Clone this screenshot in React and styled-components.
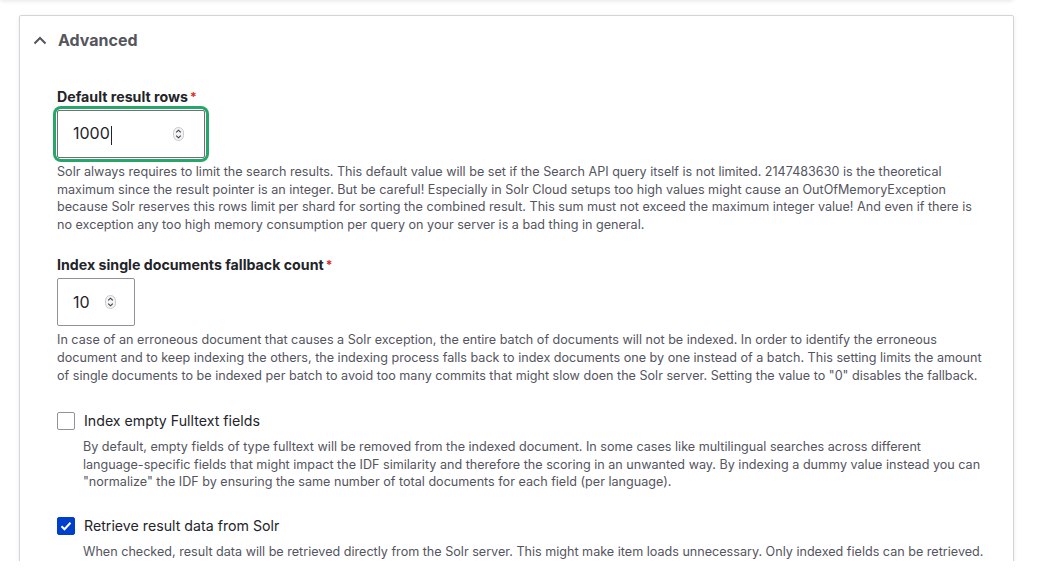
import React from 'react';
import styled, { createGlobalStyle } from 'styled-components';

const GlobalStyle = createGlobalStyle`
  html, body {
    margin: 0;
    padding: 0;
    background: #fff;
    overflow: hidden;
  }
  body {
    font-family: Inter, "Liberation Sans", Arial, sans-serif;
    color: #232429;
    -webkit-font-smoothing: antialiased;
  }
`;

const Page = styled.div`
  width: 1037px;
  height: 581px;
  padding-left: 19px;
  box-sizing: border-box;
`;

const PrevCard = styled.div`
  width: 1013px;
  height: 20px;
  margin: -20px 0 0 -19px;
  background: #fff;
  box-shadow: 0 1px 4px rgba(0, 0, 0, 0.1);
`;

const Details = styled.div`
  width: 995px;
  height: 600px;
  margin-top: 15px;
  box-sizing: border-box;
  border: 1px solid #d3d4d9;
  border-radius: 2px;
  box-shadow: 0 1px 4px rgba(0, 0, 0, 0.08);
`;

const Summary = styled.div`
  display: flex;
  align-items: center;
  gap: 11px;
  height: 48px;
  padding-left: 13px;
  font-size: 16px;
  font-weight: 700;
  color: #55565b;
`;

const Body = styled.div`
  padding: 24px 0 0 37px;
`;

const FormItem = styled.div`
  margin-bottom: ${({ $mb }) => $mb || 24}px;
`;

const Label = styled.div`
  font-size: 14.2px;
  font-weight: 700;
  line-height: 18px;
  margin-bottom: 4px;
  color: #232429;

  &::after {
    content: '*';
    color: #dc2323;
    margin-left: 2px;
    font-size: 12px;
    vertical-align: top;
  }
`;

const FocusRing = styled.div`
  display: inline-block;
  border-radius: 4px;
  box-shadow: ${({ $focus }) =>
    $focus ? '0 0 0 1px #fff, 0 0 0 4px #26a769' : 'none'};
`;

const NumberField = styled.div`
  display: flex;
  align-items: center;
  justify-content: space-between;
  width: ${({ $w }) => $w}px;
  height: 48px;
  box-sizing: border-box;
  padding: 0 ${({ $pr }) => $pr}px 0 15px;
  border: 1px solid ${({ $focus }) => ($focus ? '#6f7077' : '#919297')};
  border-radius: 2px;
  font-size: 16px;
  color: #232429;
  background: #fff;
`;

const Caret = styled.span`
  display: inline-block;
  width: 1px;
  height: 19px;
  margin-left: 1px;
  background: #232429;
  vertical-align: middle;
`;

const Description = styled.div`
  margin-top: ${({ $indent }) => ($indent ? 7 : 5)}px;
  font-size: 12.6px;
  line-height: 17.6px;
  color: #545560;
  padding-left: ${({ $indent }) => ($indent ? 26 : 0)}px;
  white-space: nowrap;
`;

const CheckRow = styled.div`
  display: flex;
  align-items: center;
  gap: 9px;
  font-size: 14.2px;
  line-height: 20px;
  color: #232429;
`;

const Box = styled.span`
  display: inline-flex;
  align-items: center;
  justify-content: center;
  width: 18px;
  height: 18px;
  box-sizing: border-box;
  border-radius: 2px;
  border: 1px solid ${({ $checked }) => ($checked ? '#003ecc' : '#919297')};
  background: ${({ $checked }) => ($checked ? '#003ecc' : '#fff')};
`;

const Chevron = () => (
  <svg width="14" height="9" viewBox="0 0 14 9" fill="none">
    <path d="M1.5 7.5L7 2l5.5 5.5" stroke="#55565b" strokeWidth="2" />
  </svg>
);

const Spinner = () => (
  <svg width="11" height="14" viewBox="0 0 11 14" fill="none">
    <rect x="0.5" y="0.5" width="10" height="13" rx="5" fill="#f3f3f5" stroke="#c9cacf" />
    <path d="M3.2 5.4L5.5 3.2l2.3 2.2" stroke="#3b3c42" strokeWidth="1.1" />
    <path d="M3.2 8.6L5.5 10.8l2.3-2.2" stroke="#3b3c42" strokeWidth="1.1" />
  </svg>
);

const Check = () => (
  <svg width="12" height="10" viewBox="0 0 12 10" fill="none">
    <path d="M1.5 5.2l3 3L10.5 1.8" stroke="#fff" strokeWidth="2" />
  </svg>
);

const NumberInput = ({ value, width, pr, focus }) => (
  <FocusRing $focus={focus}>
    <NumberField $w={width} $pr={pr} $focus={focus}>
      <span>
        {value}
        {focus && <Caret />}
      </span>
      <Spinner />
    </NumberField>
  </FocusRing>
);

export default function App() {
  return (
    <Page>
      <GlobalStyle />
      <PrevCard />
      <Details>
        <Summary>
          <Chevron />
          Advanced
        </Summary>
        <Body>
          <FormItem $mb={23}>
            <Label>Default result rows</Label>
            <NumberInput value="1000" width={148} pr={20} focus />
            <Description>
              Solr always requires to limit the search results. This default value will be set if the Search API query itself is not limited. 2147483630 is the theoretical
              <br />
              maximum since the result pointer is an integer. But be careful! Especially in Solr Cloud setups too high values might cause an OutOfMemoryException
              <br />
              because Solr reserves this rows limit per shard for sorting the combined result. This sum must not exceed the maximum integer value! And even if there is
              <br />
              no exception any too high memory consumption per query on your server is a bad thing in general.
            </Description>
          </FormItem>
          <FormItem $mb={27}>
            <Label>Index single documents fallback count</Label>
            <NumberInput value="10" width={78} pr={18} />
            <Description>
              In case of an erroneous document that causes a Solr exception, the entire batch of documents will not be indexed. In order to identify the erroneous
              <br />
              document and to keep indexing the others, the indexing process falls back to index documents one by one instead of a batch. This setting limits the amount
              <br />
              of single documents to be indexed per batch to avoid too many commits that might slow doen the Solr server. Setting the value to "0" disables the fallback.
            </Description>
          </FormItem>
          <FormItem $mb={25}>
            <CheckRow>
              <Box />
              Index empty Fulltext fields
            </CheckRow>
            <Description $indent>
              By default, empty fields of type fulltext will be removed from the indexed document. In some cases like multilingual searches across different
              <br />
              language-specific fields that might impact the IDF similarity and therefore the scoring in an unwanted way. By indexing a dummy value instead you can
              <br />
              "normalize" the IDF by ensuring the same number of total documents for each field (per language).
            </Description>
          </FormItem>
          <FormItem>
            <CheckRow>
              <Box $checked>
                <Check />
              </Box>
              Retrieve result data from Solr
            </CheckRow>
            <Description $indent>
              When checked, result data will be retrieved directly from the Solr server. This might make item loads unnecessary. Only indexed fields can be retrieved.
              <br />
              Note also that the returned field data might not always be correct, due to preprocessing and caching issues.
            </Description>
          </FormItem>
        </Body>
      </Details>
    </Page>
  );
}
